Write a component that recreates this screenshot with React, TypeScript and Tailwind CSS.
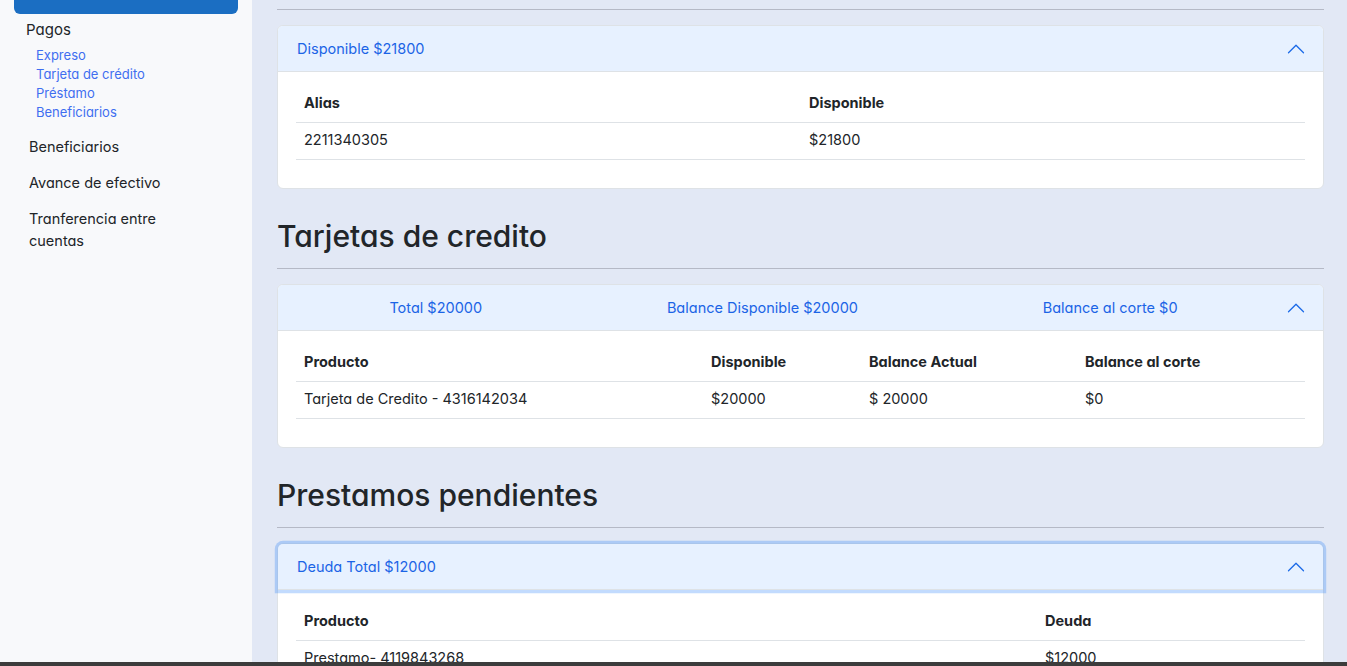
import React from 'react';

const font = "[font-family:Inter,'Noto_Sans',sans-serif] [font-feature-settings:'cv11']";

const subPagos = ['Expreso', 'Tarjeta de crédito', 'Préstamo', 'Beneficiarios'];

type Col = { label: string; w: string };

function Chevron() {
  return (
    <svg viewBox="0 0 16 16" className="w-5 h-5 shrink-0 rotate-180" fill="#1b6ae8">
      <path fillRule="evenodd" d="M1.646 4.646a.5.5 0 0 1 .708 0L8 10.293l5.646-5.647a.5.5 0 0 1 .708.708l-6 6a.5.5 0 0 1-.708 0l-6-6a.5.5 0 0 1 0-.708z" />
    </svg>
  );
}

function DataTable({ cols, rows }: { cols: Col[]; rows: string[][] }) {
  return (
    <div className="text-[14.5px] text-[#212529]">
      <div className="flex h-[35px] items-center border-b border-[#dee2e6] pb-[4px] font-bold">
        {cols.map(c => (
          <div key={c.label} className={`${c.w} px-2`}>{c.label}</div>
        ))}
      </div>
      {rows.map((r, i) => (
        <div key={i} className="flex h-[37px] items-center border-b border-[#dee2e6] pb-[2px]">
          {r.map((v, j) => (
            <div key={j} className={`${cols[j].w} px-2`}>{v}</div>
          ))}
        </div>
      ))}
    </div>
  );
}

function Card({ header, focused, children }: { header: React.ReactNode; focused?: boolean; children: React.ReactNode }) {
  return (
    <div className="mt-[15px] rounded-[6px] border border-[#dee2e6] bg-white">
      <div className={`relative flex h-[46px] items-center gap-4 rounded-t-[5px] border-b border-[#dee2e6] bg-[#e7f1ff] pl-[19px] pr-[17px] text-[14.5px] text-[#1b64e6] ${focused ? 'z-10 shadow-[0_0_0_0.2rem_rgba(13,110,253,0.25)]' : ''}`}>
        <div className="flex-1">{header}</div>
        <Chevron />
      </div>
      <div className="px-[18px] pt-[16px] pb-[28px]">{children}</div>
    </div>
  );
}

function Section({ title }: { title: string }) {
  return (
    <>
      <h2 className="mt-[28px] h-[38px] text-[30px] leading-[38px] font-medium text-[#212529]">{title}</h2>
      <div className="mt-[13px] h-px bg-[#b5b9c6]" />
    </>
  );
}

export default function App() {
  return (
    <div className={`${font} flex h-[666px] overflow-hidden bg-[#e2e8f5]`}>
      <aside className="w-[252px] shrink-0 bg-[#f8f9fb]">
        <div className="mx-[14px] -mt-[26px] flex h-[40px] items-center rounded-[6px] bg-[#1b6ec2] pl-[30px] text-[15px] text-white">Home</div>
        <div className="mt-[5px] pl-[26px] text-[15px] leading-[22px] text-[#212529]">Pagos</div>
        <ul className="mt-[5px] pl-[36px] text-[13px] leading-[19px] text-[#3f6ef0]">
          {subPagos.map(s => <li key={s}>{s}</li>)}
        </ul>
        <div className="mt-[14px] flex flex-col gap-[14px] pl-[29px] text-[14.5px] leading-[22px] text-[#212529]">
          <div>Beneficiarios</div>
          <div>Avance de efectivo</div>
          <div className="w-[170px]">Tranferencia entre cuentas</div>
        </div>
      </aside>

      <main className="flex-1 pl-[25px] pr-[23px] pt-[9px]">
        <div className="h-px bg-[#b5b9c6]" />
        <Card header="Disponible $21800">
          <DataTable
            cols={[{ label: 'Alias', w: 'w-[505px]' }, { label: 'Disponible', w: 'flex-1' }]}
            rows={[['2211340305', '$21800']]}
          />
        </Card>

        <Section title="Tarjetas de credito" />
        <Card header={
          <div className="flex justify-around">
            <span>Total $20000</span>
            <span>Balance Disponible $20000</span>
            <span>Balance al corte $0</span>
          </div>
        }>
          <DataTable
            cols={[
              { label: 'Producto', w: 'w-[407px]' },
              { label: 'Disponible', w: 'w-[158px]' },
              { label: 'Balance Actual', w: 'w-[216px]' },
              { label: 'Balance al corte', w: 'flex-1' },
            ]}
            rows={[['Tarjeta de Credito - 4316142034', '$20000', '$ 20000', '$0']]}
          />
        </Card>

        <Section title="Prestamos pendientes" />
        <Card header="Deuda Total $12000" focused>
          <DataTable
            cols={[{ label: 'Producto', w: 'w-[741px]' }, { label: 'Deuda', w: 'flex-1' }]}
            rows={[['Prestamo- 4119843268', '$12000']]}
          />
        </Card>
      </main>

      <div className="fixed bottom-0 left-0 right-0 h-[4px] bg-[#3c3c3c]" />
    </div>
  );
}
